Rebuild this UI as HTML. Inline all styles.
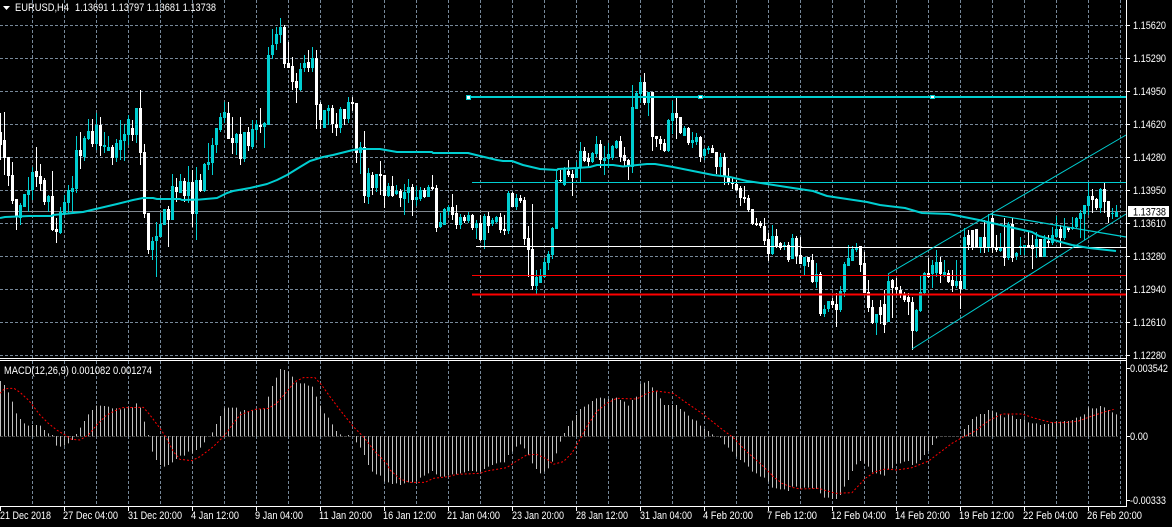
<!DOCTYPE html>
<html><head><meta charset="utf-8"><title>EURUSD,H4</title>
<style>
html,body{margin:0;padding:0;background:#000;width:1172px;height:527px;overflow:hidden}
svg{display:block}
text{font-family:"Liberation Sans",Arial,sans-serif;font-size:11px;fill:#fff}
</style></head><body>
<svg width="1172" height="527" viewBox="0 0 1172 527" xmlns="http://www.w3.org/2000/svg">
<rect width="1172" height="527" fill="#000"/>
<g stroke="#778899" stroke-width="1" stroke-dasharray="3 2" shape-rendering="crispEdges" fill="none">
<path d="M0 25.5H1126M0 58.5H1126M0 91.5H1126M0 124.5H1126M0 157.5H1126M0 190.5H1126M0 223.5H1126M0 256.5H1126M0 289.5H1126M0 322.5H1126M0 355.5H1126"/>
<path d="M32.5 0V358M64.5 0V358M96.5 0V358M128.5 0V358M160.5 0V358M192.5 0V358M224.5 0V358M256.5 0V358M288.5 0V358M320.5 0V358M352.5 0V358M384.5 0V358M416.5 0V358M448.5 0V358M480.5 0V358M512.5 0V358M544.5 0V358M576.5 0V358M608.5 0V358M640.5 0V358M672.5 0V358M704.5 0V358M736.5 0V358M768.5 0V358M800.5 0V358M832.5 0V358M864.5 0V358M896.5 0V358M928.5 0V358M960.5 0V358M992.5 0V358M1024.5 0V358M1056.5 0V358M1088.5 0V358M1120.5 0V358"/>
<path d="M32.5 361V506M64.5 361V506M96.5 361V506M128.5 361V506M160.5 361V506M192.5 361V506M224.5 361V506M256.5 361V506M288.5 361V506M320.5 361V506M352.5 361V506M384.5 361V506M416.5 361V506M448.5 361V506M480.5 361V506M512.5 361V506M544.5 361V506M576.5 361V506M608.5 361V506M640.5 361V506M672.5 361V506M704.5 361V506M736.5 361V506M768.5 361V506M800.5 361V506M832.5 361V506M864.5 361V506M896.5 361V506M928.5 361V506M960.5 361V506M992.5 361V506M1024.5 361V506M1056.5 361V506M1088.5 361V506M1120.5 361V506"/>
</g>
<path d="M0 211.5H1126" stroke="#808890" stroke-width="1" shape-rendering="crispEdges"/>
<g fill="none" shape-rendering="crispEdges">
<path stroke="#fff" stroke-width="1" d="M.5 113V160M4.5 112V175M8.5 157V186M12.5 162V204M16.5 199V230M36.5 147V187M40.5 164V191M44.5 178V205M52.5 171V231M56.5 218V243M80.5 132V169M92.5 119V147M100.5 117V156M112.5 145V165M132.5 120V141M140.5 90V165M144.5 144V218M148.5 213V254M168.5 206V247M176.5 178V202M184.5 178V202M192.5 170V227M200.5 174V192M228.5 102V139M232.5 117V154M240.5 117V165M248.5 127V151M260.5 108V133M284.5 25V68M288.5 42V68M292.5 57V90M296.5 73V103M308.5 50V72M316.5 50V129M320.5 102V129M332.5 105V133M336.5 113V136M344.5 109V125M352.5 97V111M356.5 103V163M364.5 131V203M372.5 172V195M380.5 161V195M384.5 175V208M392.5 176V197M400.5 189V207M412.5 184V216M424.5 188V198M432.5 175V190M436.5 185V232M452.5 194V220M456.5 205V229M464.5 215V223M472.5 214V230M480.5 215V241M488.5 212V233M500.5 213V233M504.5 215V235M512.5 192V207M520.5 195V203M524.5 197V245M528.5 226V277M532.5 204V290M560.5 170V183M568.5 160V177M572.5 170V196M584.5 147V162M588.5 153V167M600.5 140V168M620.5 136V162M624.5 147V167M628.5 159V180M644.5 73V105M652.5 92V151M656.5 136V147M660.5 136V150M664.5 139V152M676.5 98V139M680.5 117V134M688.5 127V145M700.5 136V162M712.5 145V153M716.5 152V174M724.5 153V185M728.5 168V185M732.5 178V189M736.5 180V191M740.5 186V206M744.5 186V203M748.5 195V212M752.5 209V225M756.5 218V226M760.5 221V228M764.5 218V245M768.5 233V261M776.5 229V248M780.5 242V250M788.5 242V262M796.5 236V264M800.5 237V264M808.5 257V267M812.5 254V283M820.5 272V316M832.5 298V308M836.5 293V327M860.5 246V272M864.5 252V293M868.5 280V312M872.5 300V324M880.5 300V324M884.5 290V333M892.5 279V318M896.5 278V294M900.5 286V298M904.5 292V302M908.5 293V315M912.5 297V350M928.5 258V278M940.5 257V283M948.5 270V283M952.5 270V292M960.5 270V309M968.5 230V250M972.5 230V250M976.5 229V248M984.5 220V253M992.5 213V253M996.5 235V252M1004.5 218V266M1012.5 218V262M1028.5 232V248M1032.5 235V269M1040.5 239V257M1048.5 235V248M1060.5 225V248M1068.5 227V232M1092.5 189V213M1096.5 198V210M1104.5 183V213M1108.5 201V223"/>
<path stroke="#fff" stroke-width="3" d="M.5 132V145M4.5 140V158M8.5 157V176M12.5 175V201M16.5 199V216M36.5 171V177M40.5 176V184M44.5 180V202M52.5 196V230M56.5 229V232M80.5 150V156M92.5 131V144M100.5 125V146M112.5 147V158M132.5 128V135M140.5 108V153M144.5 152V214M148.5 213V250M168.5 209V220M176.5 187V192M184.5 181V196M192.5 182V214M200.5 180V191M228.5 113V139M232.5 138V143M240.5 134V159M248.5 132V146M260.5 125V127M284.5 27V64M288.5 63V68M292.5 66V82M296.5 81V88M308.5 62V68M316.5 58V105M320.5 104V120M332.5 108V124M336.5 124V128M344.5 109V119M352.5 102V104M356.5 103V153M364.5 147V196M372.5 175V188M380.5 174V176M384.5 175V196M392.5 186V196M400.5 191V198M412.5 187V200M424.5 190V197M432.5 187V189M436.5 188V228M452.5 207V215M456.5 213V225M464.5 217V221M472.5 215V228M480.5 223V240M488.5 216V226M500.5 217V230M504.5 229V231M512.5 193V207M520.5 198V201M524.5 200V239M528.5 238V250M532.5 249V286M560.5 180V181M568.5 171V175M572.5 174V178M584.5 151V161M588.5 158V162M600.5 144V160M620.5 141V157M624.5 155V161M628.5 160V166M644.5 82V103M652.5 92V137M656.5 136V139M660.5 139V144M664.5 143V151M676.5 113V118M680.5 117V133M688.5 128V143M700.5 137V157M712.5 148V153M716.5 152V167M724.5 157V176M728.5 177V182M732.5 182V184M736.5 184V190M740.5 188V198M744.5 197V199M748.5 198V210M752.5 209V224M756.5 223V225M760.5 223V226M764.5 226V241M768.5 239V254M776.5 236V247M780.5 243V248M788.5 245V260M796.5 238V256M800.5 255V264M808.5 257V262M812.5 260V282M820.5 274V314M832.5 301V305M836.5 304V310M860.5 246V265M864.5 263V293M868.5 292V308M872.5 307V323M880.5 307V315M884.5 304V325M892.5 280V288M896.5 287V290M900.5 290V295M904.5 295V300M908.5 297V302M912.5 302V331M928.5 273V277M940.5 262V274M948.5 273V282M952.5 280V286M960.5 281V289M968.5 235V245M972.5 230V247M976.5 229V247M984.5 237V248M992.5 218V248M996.5 248V250M1004.5 248V258M1012.5 224V258M1028.5 245V247M1032.5 245V249M1040.5 239V257M1048.5 241V243M1060.5 229V238M1068.5 227V230M1092.5 196V200M1096.5 199V208M1104.5 189V202M1108.5 201V217"/>
<path stroke="#00ced1" stroke-width="1" d="M20.5 203V225M24.5 194V207M28.5 177V212M32.5 167V200M48.5 195V212M60.5 207V234M64.5 195V215M68.5 185V214M72.5 176V212M76.5 136V193M84.5 136V161M88.5 119V140M96.5 113V150M104.5 132V153M108.5 136V151M116.5 139V162M120.5 120V160M124.5 124V161M128.5 115V145M136.5 108V143M152.5 237V260M156.5 222V277M160.5 213V237M164.5 209V225M172.5 174V220M180.5 174V193M188.5 166V203M196.5 167V240M204.5 163V192M208.5 143V170M212.5 138V175M216.5 128V153M220.5 113V132M224.5 102V123M236.5 133V155M244.5 132V162M252.5 120V149M256.5 120V140M264.5 122V148M268.5 47V125M272.5 29V59M276.5 27V50M280.5 18V43M300.5 63V91M304.5 55V72M312.5 47V72M324.5 110V128M328.5 105V125M340.5 107V133M348.5 97V123M360.5 142V174M368.5 168V204M376.5 174V192M388.5 183V197M396.5 185V195M404.5 184V215M408.5 179V203M416.5 186V206M420.5 187V201M428.5 185V197M440.5 213V228M444.5 208V225M448.5 205V215M460.5 214V229M468.5 212V223M476.5 220V239M484.5 214V249M492.5 218V226M496.5 216V223M508.5 191V234M516.5 194V210M536.5 270V294M540.5 269V283M544.5 258V278M548.5 251V270M552.5 227V259M556.5 170V229M564.5 167V186M576.5 162V178M580.5 142V182M592.5 152V163M596.5 136V157M604.5 146V175M608.5 143V168M612.5 145V160M616.5 140V149M632.5 85V173M636.5 91V109M640.5 77V103M648.5 92V116M668.5 119V152M672.5 101V134M684.5 126V136M692.5 132V148M696.5 133V145M704.5 148V160M708.5 146V154M720.5 153V175M772.5 225V255M784.5 242V250M792.5 234V259M804.5 257V275M816.5 263V288M824.5 305V317M828.5 301V312M840.5 286V312M844.5 262V297M848.5 245V266M852.5 246V261M856.5 243V252M876.5 314V335M888.5 274V322M916.5 309V332M920.5 275V312M924.5 272V295M932.5 260V288M936.5 250V277M944.5 260V277M956.5 260V288M964.5 228V289M980.5 237V253M988.5 214V252M1000.5 233V252M1008.5 222V260M1016.5 252V260M1020.5 237V255M1024.5 245V255M1036.5 232V258M1044.5 235V257M1052.5 227V245M1056.5 216V238M1064.5 218V240M1072.5 217V230M1076.5 217V228M1080.5 210V238M1084.5 205V240M1088.5 182V215M1100.5 188V213M1112.5 208V219M1116.5 205V217"/>
<path stroke="#00ced1" stroke-width="3" d="M20.5 205V218M24.5 194V207M28.5 190V195M32.5 172V190M48.5 196V202M60.5 212V233M64.5 202V214M68.5 190V203M72.5 188V192M76.5 150V189M84.5 138V157M88.5 131V139M96.5 125V144M104.5 145V147M108.5 147V151M116.5 143V158M120.5 140V150M124.5 134V141M128.5 119V135M136.5 108V135M152.5 241V250M156.5 236V241M160.5 224V237M164.5 209V225M172.5 186V220M180.5 181V193M188.5 182V196M196.5 180V214M204.5 164V191M208.5 162V165M212.5 145V163M216.5 128V145M220.5 117V130M224.5 112V118M236.5 134V143M244.5 132V159M252.5 129V147M256.5 124V130M264.5 123V127M268.5 55V125M272.5 45V55M276.5 34V44M280.5 27V35M300.5 69V90M304.5 63V68M312.5 58V68M324.5 110V128M328.5 108V111M340.5 109V128M348.5 102V119M360.5 147V153M368.5 173V197M376.5 174V188M388.5 186V196M396.5 191V194M404.5 192V199M408.5 187V193M416.5 197V200M420.5 190V199M428.5 187V197M440.5 222V227M444.5 209V225M448.5 207V211M460.5 217V225M468.5 215V221M476.5 223V228M484.5 216V240M492.5 220V224M496.5 217V222M508.5 193V231M516.5 198V207M536.5 277V286M540.5 276V283M544.5 262V277M548.5 254V263M552.5 228V255M556.5 180V229M564.5 168V185M576.5 168V178M580.5 151V168M592.5 153V162M596.5 144V154M604.5 158V161M608.5 154V159M612.5 146V158M616.5 141V148M632.5 107V167M636.5 93V109M640.5 82V94M648.5 92V103M668.5 120V151M672.5 113V121M684.5 128V136M692.5 140V143M696.5 137V142M704.5 149V156M708.5 148V150M720.5 157V167M772.5 236V254M784.5 245V247M792.5 238V259M804.5 257V266M816.5 274V282M824.5 309V314M828.5 301V309M840.5 291V310M844.5 264V292M848.5 258V266M852.5 249V261M856.5 247V250M876.5 314V323M888.5 281V322M916.5 310V331M920.5 292V311M924.5 273V293M932.5 265V274M936.5 262V273M944.5 272V276M956.5 281V286M964.5 237V289M980.5 237V247M988.5 222V248M1000.5 248V251M1008.5 224V258M1016.5 253V256M1020.5 246V247M1024.5 245V247M1036.5 239V248M1044.5 239V257M1052.5 235V243M1056.5 229V237M1064.5 227V238M1072.5 227V229M1076.5 218V227M1080.5 213V219M1084.5 205V214M1088.5 196V206M1100.5 189V208M1112.5 213V214M1116.5 212V217"/>
</g>
<g shape-rendering="crispEdges" fill="none">
<path d="M472 182.5H1126" stroke="#00ced1" stroke-width="1"/>
<path d="M476 246.5H801V247.5H1126" stroke="#fff" stroke-width="1"/>
<path d="M472 275.5H1126" stroke="#f00" stroke-width="1"/>
<path d="M472 294.5H1126" stroke="#f00" stroke-width="1.6"/>
<path d="M468 97H1126" stroke="#00ced1" stroke-width="2"/>
</g>
<g fill="#fff" stroke="#00ced1" stroke-width="1" shape-rendering="crispEdges">
<rect x="466.5" y="95.5" width="4" height="4"/>
<rect x="698.5" y="95.5" width="4" height="3"/>
<rect x="930.5" y="95.5" width="4" height="3"/>
</g>
<g fill="none" stroke="#00ced1" stroke-width="1">
<path d="M912 349L1126 214"/>
<path d="M888 274L1126 135"/>
<path d="M990 214L1126 237" stroke-width="1.2"/>
</g>
<polyline fill="none" stroke="#00ced1" stroke-width="2" stroke-linejoin="round" points="0,218 5,217 29,216 52,216 53,215 83,212 100,208 117,204 133,200 143,198 153,198 157,199 180,199 182,200 200,199.5 217,198 227,193 233,191 250,188 267,184 277,180 287,175 300,167 310,161 323,157 333,155 353,150 360,149 380,149 397,152 432,152 433,153 468,153 480,156 497,160 503,161 512,161 523,165 540,169 557,170 558,169 577,168 590,167 597,165 613,165 623,166.5 647,164 655,164 673,167 693,171 713,175 730,177 747,181 767,184 793,188 813,191 827,196 847,199 867,202 880,205 905,208 922,213 949,214 979,220 1005,226 1032,232 1039,236 1072,245 1089,248 1116,251"/>
<g shape-rendering="crispEdges" stroke="#fff" stroke-width="1" fill="none">
<path d="M0 358.5H1126M0 360.5H1126M0 506.5H1127M1126.5 0V507"/>
<path d="M1126 25.5H1130M1126 58.5H1130M1126 91.5H1130M1126 124.5H1130M1126 157.5H1130M1126 190.5H1130M1126 223.5H1130M1126 256.5H1130M1126 289.5H1130M1126 322.5H1130M1126 355.5H1130M1126 368.5H1130M1126 436.5H1130M1126 500.5H1130"/>
<path d="M.5 506V511M64.5 506V511M128.5 506V511M192.5 506V511M256.5 506V511M320.5 506V511M384.5 506V511M448.5 506V511M512.5 506V511M576.5 506V511M640.5 506V511M704.5 506V511M768.5 506V511M832.5 506V511M896.5 506V511M960.5 506V511M1024.5 506V511M1088.5 506V511"/>
</g>
<g transform="translate(0 355) scale(1 .33333)" shape-rendering="crispEdges" fill="none" stroke="#c0c0c0" stroke-width="1">
<path d="M0 244H1118" stroke-dasharray="3 1"/>
<path d="M.5 244V78M4.5 244V90M8.5 244V112M12.5 244V140M16.5 244V175M20.5 244V192M24.5 244V205M28.5 244V212M32.5 244V210M36.5 244V210M40.5 244V212M44.5 244V225M48.5 244V235M52.5 244V240M56.5 244V272M60.5 244V275M64.5 244V272M68.5 244V265M72.5 244V255M76.5 244V237M80.5 244V218M84.5 244V198M88.5 244V178M92.5 244V165M96.5 244V152M100.5 244V152M104.5 244V153M108.5 244V155M112.5 244V160M116.5 244V160M120.5 244V163M124.5 244V160M128.5 244V157M132.5 244V157M136.5 244V145M140.5 244V158M144.5 244V200M148.5 244V240M152.5 244V290M156.5 244V315M160.5 244V330M164.5 244V335M168.5 244V330M172.5 244V322M176.5 244V312M180.5 244V302M184.5 244V302M188.5 244V290M192.5 244V295M196.5 244V285M200.5 244V278M204.5 244V262M212.5 244V232M216.5 244V207M220.5 244V183M224.5 244V158M228.5 244V158M232.5 244V158M236.5 244V158M240.5 244V170M244.5 244V165M248.5 244V168M252.5 244V166M256.5 244V164M260.5 244V162M264.5 244V160M268.5 244V125M272.5 244V93M276.5 244V68M280.5 244V42M284.5 244V45M288.5 244V50M292.5 244V65M296.5 244V82M300.5 244V85M304.5 244V85M308.5 244V92M312.5 244V95M316.5 244V125M320.5 244V152M324.5 244V175M328.5 244V188M332.5 244V208M336.5 244V228M340.5 244V238M348.5 244V240M356.5 244V262M360.5 244V278M364.5 244V300M368.5 244V330M372.5 244V350M376.5 244V358M380.5 244V362M384.5 244V380M388.5 244V382M392.5 244V387M396.5 244V385M400.5 244V390M404.5 244V385M408.5 244V382M412.5 244V382M416.5 244V378M420.5 244V368M424.5 244V362M428.5 244V355M432.5 244V348M436.5 244V358M440.5 244V365M444.5 244V365M448.5 244V362M452.5 244V358M456.5 244V358M460.5 244V355M464.5 244V352M468.5 244V348M472.5 244V348M476.5 244V350M480.5 244V350M484.5 244V342M488.5 244V335M492.5 244V330M496.5 244V325M500.5 244V322M504.5 244V322M508.5 244V300M512.5 244V290M516.5 244V275M520.5 244V268M524.5 244V280M528.5 244V300M532.5 244V325M536.5 244V342M540.5 244V355M544.5 244V350M548.5 244V340M552.5 244V320M556.5 244V295M560.5 244V260M564.5 244V234M568.5 244V213M572.5 244V197M576.5 244V180M580.5 244V162M584.5 244V155M588.5 244V148M592.5 244V138M596.5 244V130M600.5 244V128M604.5 244V130M608.5 244V132M612.5 244V130M616.5 244V128M620.5 244V135M624.5 244V140M628.5 244V152M632.5 244V135M636.5 244V125M640.5 244V87M644.5 244V83M648.5 244V78M652.5 244V97M656.5 244V108M660.5 244V130M664.5 244V150M668.5 244V150M672.5 244V150M676.5 244V150M680.5 244V162M684.5 244V170M688.5 244V182M692.5 244V193M696.5 244V197M700.5 244V212M704.5 244V222M708.5 244V228M712.5 244V238M720.5 244V248M724.5 244V268M728.5 244V278M732.5 244V290M736.5 244V305M740.5 244V315M744.5 244V322M748.5 244V335M752.5 244V350M756.5 244V355M760.5 244V365M764.5 244V368M768.5 244V380M772.5 244V398M776.5 244V400M780.5 244V403M784.5 244V403M788.5 244V408M792.5 244V395M796.5 244V395M800.5 244V400M804.5 244V398M808.5 244V398M812.5 244V400M816.5 244V402M820.5 244V415M824.5 244V428M828.5 244V428M832.5 244V432M836.5 244V432M840.5 244V420M844.5 244V395M848.5 244V375M852.5 244V348M856.5 244V328M860.5 244V318M864.5 244V325M868.5 244V335M872.5 244V352M876.5 244V355M880.5 244V358M884.5 244V362M888.5 244V345M892.5 244V340M896.5 244V325M900.5 244V325M904.5 244V320M908.5 244V318M912.5 244V330M916.5 244V325M920.5 244V315M924.5 244V300M928.5 244V288M932.5 244V270M936.5 244V250M964.5 244V222M968.5 244V210M972.5 244V192M976.5 244V185M980.5 244V177M984.5 244V177M988.5 244V165M992.5 244V167M996.5 244V172M1000.5 244V178M1004.5 244V187M1008.5 244V177M1012.5 244V182M1016.5 244V192M1020.5 244V192M1024.5 244V193M1028.5 244V202M1032.5 244V205M1036.5 244V205M1040.5 244V210M1044.5 244V207M1048.5 244V207M1052.5 244V202M1056.5 244V200M1060.5 244V200M1064.5 244V198M1068.5 244V198M1072.5 244V195M1076.5 244V188M1080.5 244V185M1084.5 244V178M1088.5 244V157M1092.5 244V160M1096.5 244V160M1100.5 244V153M1104.5 244V157M1108.5 244V165M1112.5 244V172M1116.5 244V178"/>
</g>
<g fill="none" stroke="#f00" stroke-width="3" stroke-dasharray="6 6">
<polyline transform="translate(0 355) scale(.33333)" points="0,115 12,103 25,100 42,100 60,112 85,135 97,150 120,180 145,205 170,225 195,240 215,253 240,255 265,240 290,210 320,180 340,170 365,158 430,157 450,180 480,220 500,250 520,290 540,313 575,317 600,305 640,275 675,240 700,205 720,180 745,170 765,163 805,160 830,145 860,110 885,80 910,68 945,68 965,90 990,125 1020,165 1060,215 1090,245 1125,290 1160,325 1170,345"/>
<polyline transform="translate(390 355) scale(.33333)" points="0,345 30,372 60,382 105,382 130,370 175,365 200,358 270,355 290,348 350,338 380,318 410,300 440,298 470,312 490,328 520,320 545,295 565,262 590,215 620,170 650,145 680,130 740,132 775,113 800,108 850,115 880,137 940,178 990,218 1030,248 1070,290 1110,325 1146,360"/>
<polyline transform="translate(772 355) scale(.33333)" points="0,362 30,385 60,397 85,402 140,400 190,415 240,413 280,370 310,350 340,342 375,345 420,338 470,318 500,295 540,265 570,248 610,228 650,197 690,177 750,177 790,190 840,203 880,203 920,198 960,183 1000,170 1025,163"/>
</g>
<path d="M3 6H10L6.5 10Z" fill="#fff"/>
<text x="15" y="11" textLength="54" lengthAdjust="spacingAndGlyphs">EURUSD,H4</text>
<text x="75" y="11" textLength="141" lengthAdjust="spacingAndGlyphs">1.13691 1.13797 1.13681 1.13738</text>
<text x="4" y="374" textLength="148" lengthAdjust="spacingAndGlyphs">MACD(12,26,9) 0.001082 0.001274</text>
<g>
<text x="1133" y="29" textLength="33" lengthAdjust="spacingAndGlyphs">1.15620</text>
<text x="1133" y="62" textLength="33" lengthAdjust="spacingAndGlyphs">1.15290</text>
<text x="1133" y="95" textLength="33" lengthAdjust="spacingAndGlyphs">1.14950</text>
<text x="1133" y="128" textLength="33" lengthAdjust="spacingAndGlyphs">1.14620</text>
<text x="1133" y="161" textLength="33" lengthAdjust="spacingAndGlyphs">1.14280</text>
<text x="1133" y="194" textLength="33" lengthAdjust="spacingAndGlyphs">1.13950</text>
<text x="1133" y="227" textLength="33" lengthAdjust="spacingAndGlyphs">1.13610</text>
<text x="1133" y="260" textLength="33" lengthAdjust="spacingAndGlyphs">1.13280</text>
<text x="1133" y="293" textLength="33" lengthAdjust="spacingAndGlyphs">1.12940</text>
<text x="1133" y="326" textLength="33" lengthAdjust="spacingAndGlyphs">1.12610</text>
<text x="1133" y="359" textLength="33" lengthAdjust="spacingAndGlyphs">1.12280</text>
<text x="1130" y="372" textLength="38" lengthAdjust="spacingAndGlyphs">0.003542</text>
<text x="1130" y="440" textLength="18" lengthAdjust="spacingAndGlyphs">0.00</text>
<text x="1130" y="504" textLength="36" lengthAdjust="spacingAndGlyphs">-0.00333</text>
</g>
<path d="M1128 206H1169V217H1128Z" fill="#fff"/>
<text x="1133" y="215.5" textLength="33" lengthAdjust="spacingAndGlyphs" style="fill:#000">1.13738</text>
<g>
<text x="0" y="519" textLength="51" lengthAdjust="spacingAndGlyphs">21 Dec 2018</text>
<text x="63" y="519" textLength="55" lengthAdjust="spacingAndGlyphs">27 Dec 04:00</text>
<text x="128" y="519" textLength="54" lengthAdjust="spacingAndGlyphs">31 Dec 20:00</text>
<text x="191" y="519" textLength="48" lengthAdjust="spacingAndGlyphs">4 Jan 12:00</text>
<text x="255" y="519" textLength="48" lengthAdjust="spacingAndGlyphs">9 Jan 04:00</text>
<text x="319" y="519" textLength="53" lengthAdjust="spacingAndGlyphs">11 Jan 20:00</text>
<text x="383" y="519" textLength="53" lengthAdjust="spacingAndGlyphs">16 Jan 12:00</text>
<text x="447" y="519" textLength="53" lengthAdjust="spacingAndGlyphs">21 Jan 04:00</text>
<text x="512" y="519" textLength="52" lengthAdjust="spacingAndGlyphs">23 Jan 20:00</text>
<text x="576" y="519" textLength="52" lengthAdjust="spacingAndGlyphs">28 Jan 12:00</text>
<text x="640" y="519" textLength="52" lengthAdjust="spacingAndGlyphs">31 Jan 04:00</text>
<text x="703" y="519" textLength="50" lengthAdjust="spacingAndGlyphs">4 Feb 20:00</text>
<text x="767" y="519" textLength="50" lengthAdjust="spacingAndGlyphs">7 Feb 12:00</text>
<text x="831" y="519" textLength="55" lengthAdjust="spacingAndGlyphs">12 Feb 04:00</text>
<text x="895" y="519" textLength="55" lengthAdjust="spacingAndGlyphs">14 Feb 20:00</text>
<text x="959" y="519" textLength="55" lengthAdjust="spacingAndGlyphs">19 Feb 12:00</text>
<text x="1023" y="519" textLength="55" lengthAdjust="spacingAndGlyphs">22 Feb 04:00</text>
<text x="1087" y="519" textLength="55" lengthAdjust="spacingAndGlyphs">26 Feb 20:00</text>
</g>
</svg>
</body></html>
